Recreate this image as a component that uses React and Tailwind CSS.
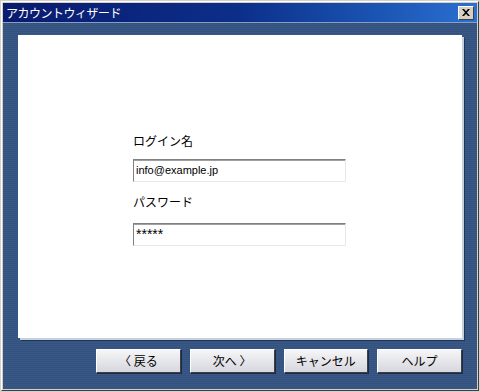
export default function App() {
  const font = { fontFamily: '"Noto Sans CJK JP", "Liberation Sans", sans-serif' };
  const btn =
    "w-[86px] h-[24px] bg-gradient-to-b from-[#f6f6f8] to-[#d6d7dd] border border-t-[#ffffff] border-l-[#ffffff] border-r-[#404040] border-b-[#404040] shadow-[1px_1px_0_#1a2a48] text-[12px] text-black flex items-center justify-center";
  const input =
    "w-[213px] h-[23px] bg-white border border-t-[#808080] border-l-[#808080] border-r-[#e8e8e8] border-b-[#e8e8e8] shadow-[inset_0_1px_0_#a0a0a0] flex items-center pl-[2px] text-black";
  return (
    <div className="w-[480px] h-[392px] bg-[#d4d0c8] p-[1px]" style={font}>
      <div className="w-full h-full flex flex-col border border-t-[#ffffff] border-l-[#ffffff] border-r-[#404040] border-b-[#404040]">
        {/* title bar */}
        <div className="h-[19px] mx-[1px] mt-[1px] bg-gradient-to-r from-[#0a1a6e] via-[#0c2f8a] to-[#2a70d2] flex items-center justify-between pl-[3px] pr-[3px]">
          <span className="text-white text-[12px] leading-none tracking-[-0.5px]">アカウントウィザード</span>
          <div className="w-[16px] h-[14px] bg-[#d4d0c8] border border-t-white border-l-white border-r-[#404040] border-b-[#404040] flex items-center justify-center">
            <svg width="8" height="7" viewBox="0 0 8 7">
              <path d="M0 0h2l2 2.3L6 0h2L5 3.5 8 7H6L4 4.7 2 7H0l3-3.5z" fill="#000" />
            </svg>
          </div>
        </div>
        {/* body */}
        <div className="flex-1 mx-[1px] mb-[1px] border-t border-[#8aa0c0] bg-[repeating-linear-gradient(180deg,#34527f_0px,#34527f_1px,#3a5886_1px,#3a5886_2px)] flex flex-col pt-[12px] pl-[15px] pr-[15px]">
          <div className="h-[303px] bg-white shadow-[2px_2px_0_#c8d0dc,3px_3px_0_#203658] flex flex-col pl-[115px] pt-[100px]">
            <div className="text-[12px] text-black leading-none h-[12px]">ログイン名</div>
            <div className={"mt-[12px] text-[11px] " + input} style={{ fontFamily: '"Liberation Sans", sans-serif' }}>
              info@example.jp
            </div>
            <div className="mt-[14px] text-[12px] text-black leading-none h-[12px]">パスワード</div>
            <div className={"mt-[15px] text-[14px] " + input} style={{ fontFamily: '"Liberation Sans", sans-serif' }}>
              *****
            </div>
          </div>
          <div className="flex gap-[9px] pl-[78px] mt-[11px]">
            <div className={btn}>〈 戻る</div>
            <div className={btn}>次へ 〉</div>
            <div className={btn}>キャンセル</div>
            <div className={btn}>ヘルプ</div>
          </div>
        </div>
      </div>
    </div>
  );
}
